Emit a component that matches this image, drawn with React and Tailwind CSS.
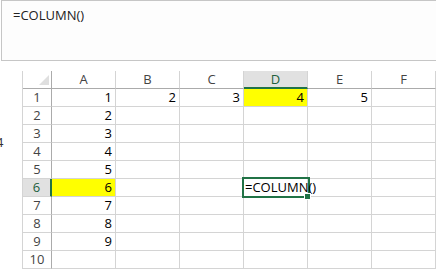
const cols = ["A", "B", "C", "D", "E", "F"]

const values = {
  "A1": 1, "B1": 2, "C1": 3, "D1": 4, "E1": 5,
  "A2": 2, "A3": 3, "A4": 4, "A5": 5, "A6": 6, "A7": 7, "A8": 8, "A9": 9,
}

const yellow = ["D1", "A6"]

function Cell({ id }) {
  const isYellow = yellow.includes(id)
  if (id === "D6") {
    return (
      <div className="relative w-[64px] h-[18px] shrink-0 border-r border-b border-[#d4d4d4] pl-[1px] leading-[17px] text-black whitespace-nowrap">
        <span className="relative z-20">=COLUMN()</span>
        <div className="absolute -left-[2px] -top-[2px] w-[68px] h-[21px] border-2 border-[#217346] z-10" />
        <div className="absolute -right-[4px] -bottom-[4px] w-[7px] h-[7px] bg-[#217346] border border-white z-20" />
      </div>
    )
  }
  return (
    <div
      className={`w-[64px] h-[18px] shrink-0 border-r border-b border-[#d4d4d4] pr-[3px] text-right leading-[17px] text-black ${
        isYellow ? "bg-[#ffff00]" : ""
      }`}
    >
      {values[id] ?? ""}
    </div>
  )
}

export default function App() {
  const rows = [1, 2, 3, 4, 5, 6, 7, 8, 9, 10]

  return (
    <div className="relative w-[436px] h-[269px] overflow-hidden bg-white font-['Open_Sans',sans-serif] text-[13px]">
      <div className="ml-[1px] h-[61px] border border-r-0 border-[#c6c6c6] bg-[#fdfdfd] pl-[11px] pt-[5px] leading-[18px] text-[#222]">
        =COLUMN()
      </div>

      <span className="absolute -left-[4px] top-[133px] leading-[18px] text-[#333]">4</span>

      <div className="ml-[22px] mt-[10px] border-l border-[#d4d4d4]">
        <div className="flex">
          <div className="w-[29px] h-[18px] shrink-0 border-r border-b border-r-[#ababab] border-b-[#ababab] flex items-end justify-end pr-[2px] pb-[3px]">
            <svg width="10" height="10" viewBox="0 0 10 10">
              <polygon points="10,0 10,10 0,10" fill="#dfdfdf" />
            </svg>
          </div>
          {cols.map((c) =>
            c === "D" ? (
              <div
                key={c}
                className="w-[64px] h-[18px] shrink-0 border-r border-[#d4d4d4] border-b-2 border-b-[#217346] bg-[#e1e1e1] text-center leading-[17px] text-[#215f3c]"
              >
                {c}
              </div>
            ) : (
              <div
                key={c}
                className="w-[64px] h-[18px] shrink-0 border-r border-b border-r-[#d4d4d4] border-b-[#ababab] text-center leading-[17px] text-[#444]"
              >
                {c}
              </div>
            )
          )}
        </div>

        {rows.map((r) => (
          <div key={r} className="flex">
            {r === 6 ? (
              <div className="w-[29px] h-[18px] shrink-0 border-b border-b-[#d4d4d4] border-r-2 border-r-[#217346] bg-[#e1e1e1] text-center leading-[17px] text-[#215f3c]">
                {r}
              </div>
            ) : (
              <div className="w-[29px] h-[18px] shrink-0 border-r border-b border-r-[#ababab] border-b-[#d4d4d4] text-center leading-[17px] text-[#444]">
                {r}
              </div>
            )}
            {cols.map((c) => (
              <Cell key={c} id={`${c}${r}`} />
            ))}
          </div>
        ))}
      </div>
    </div>
  )
}
